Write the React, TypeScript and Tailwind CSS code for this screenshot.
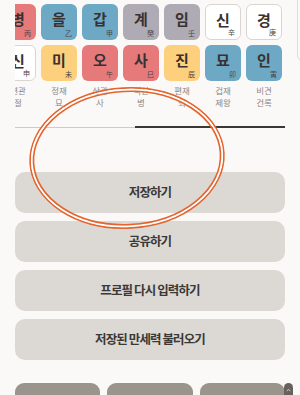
import React from "react";

type Cell = { ko: string; hanja: string; tone: "red" | "blue" | "gray" | "white" | "yellow" };

const tones: Record<Cell["tone"], string> = {
  red: "bg-[#e67a7b]",
  blue: "bg-[#6da9c5]",
  gray: "bg-[#afabb4]",
  white: "bg-white border border-[#d9d5d1]",
  yellow: "bg-[#fcd07c]",
};

const columns: { top: Cell; bottom: Cell; god: string; stage: string }[] = [
  { top: { ko: "병", hanja: "丙", tone: "red" }, bottom: { ko: "신", hanja: "申", tone: "white" }, god: "편관", stage: "절" },
  { top: { ko: "을", hanja: "乙", tone: "blue" }, bottom: { ko: "미", hanja: "未", tone: "yellow" }, god: "정재", stage: "묘" },
  { top: { ko: "갑", hanja: "甲", tone: "blue" }, bottom: { ko: "오", hanja: "午", tone: "red" }, god: "상관", stage: "사" },
  { top: { ko: "계", hanja: "癸", tone: "gray" }, bottom: { ko: "사", hanja: "巳", tone: "red" }, god: "식신", stage: "병" },
  { top: { ko: "임", hanja: "壬", tone: "gray" }, bottom: { ko: "진", hanja: "辰", tone: "yellow" }, god: "편재", stage: "쇠" },
  { top: { ko: "신", hanja: "辛", tone: "white" }, bottom: { ko: "묘", hanja: "卯", tone: "blue" }, god: "겁재", stage: "제왕" },
  { top: { ko: "경", hanja: "庚", tone: "white" }, bottom: { ko: "인", hanja: "寅", tone: "blue" }, god: "비견", stage: "건록" },
];

const actions = ["저장하기", "공유하기", "프로필 다시 입력하기", "저장된 만세력 불러오기"];

function PillarCell({ cell }: { cell: Cell }) {
  return (
    <div className={`relative h-[36px] w-[36px] rounded-[6px] ${tones[cell.tone]}`}>
      <span className="absolute inset-x-0 top-[7px] text-center text-[15px] font-bold leading-[15px] text-[#383131]">
        {cell.ko}
      </span>
      <span className="absolute bottom-[3px] right-[5px] text-[7px] leading-[8px] text-[#4a4444]">{cell.hanja}</span>
    </div>
  );
}

export default function App() {
  return (
    <div
      className="relative h-[395px] w-[300px] overflow-hidden bg-[#fbf9f7]"
      style={{ fontFamily: '"Noto Sans CJK KR", "Noto Sans", sans-serif' }}
    >
      <div className="px-[15px] pt-[4px]">
        {/* Pillars, scrolled a little to the left */}
        <div className="overflow-hidden">
          <div className="-ml-[15px] flex gap-[5px]">
            {columns.map((c, i) => (
              <div key={i} className="flex w-[36px] shrink-0 flex-col items-center">
                <PillarCell cell={c.top} />
                <div className="mt-[5px]">
                  <PillarCell cell={c.bottom} />
                </div>
                <div className="mt-[3px] text-center text-[8.5px] leading-[12px] text-[#8d8883]">
                  <div>{c.god}</div>
                  <div>{c.stage}</div>
                </div>
              </div>
            ))}
          </div>
        </div>

        {/* Tab indicator */}
        <div className="mt-[18px] flex items-center">
          <div className="h-px w-[120px] bg-[#cfcbc7]" />
          <div className="h-[2px] flex-1 bg-[#3a3836]" />
        </div>

        {/* Actions */}
        <div className="mt-[44px] flex flex-col gap-[8px]">
          {actions.map((a) => (
            <button
              key={a}
              type="button"
              className="flex h-[41px] items-center justify-center rounded-[10px] bg-[#dcd8d3] text-[12.5px] font-bold tracking-[-0.9px] text-[#3b3836]"
            >
              {a}
            </button>
          ))}
        </div>

        {/* Bottom tabs */}
        <div className="mt-[23px] grid grid-cols-3 gap-[7px]">
          <div className="h-[40px] rounded-t-[9px] bg-[#9b948d]" />
          <div className="h-[40px] rounded-t-[9px] bg-[#9b948d]" />
          <div className="h-[40px] rounded-t-[9px] bg-[#9b948d]" />
        </div>
      </div>

      {/* Neighbouring panel edge */}
      <div className="absolute left-[297px] top-[-10px] h-[73px] w-[20px] rounded-bl-[8px] border border-[#e1ddd9] bg-[#fbf9f7]" />

      {/* Scroll-to-top pill */}
      <div className="absolute left-[284px] top-[383px] flex h-[20px] w-[9px] justify-center rounded-full bg-[#66615d] pt-[5px]">
        <svg width="5" height="4" viewBox="0 0 5 4" fill="none">
          <path d="M0.8 3.2 L2.5 1.2 L4.2 3.2" stroke="#ddd" strokeWidth="0.8" />
        </svg>
      </div>

      {/* Hand-drawn highlight */}
      <svg className="pointer-events-none absolute inset-0" width="300" height="395" viewBox="0 0 300 395">
        <g transform="rotate(-3 127 158)" fill="none">
          <ellipse cx="127" cy="158" rx="97" ry="70" stroke="#e5642d" strokeWidth="1.6" />
          <ellipse cx="127" cy="158" rx="95.3" ry="68.3" stroke="#ffffff" strokeWidth="1.6" />
          <ellipse cx="127" cy="158" rx="93.6" ry="66.6" stroke="#e5642d" strokeWidth="1.6" />
        </g>
      </svg>
    </div>
  );
}
